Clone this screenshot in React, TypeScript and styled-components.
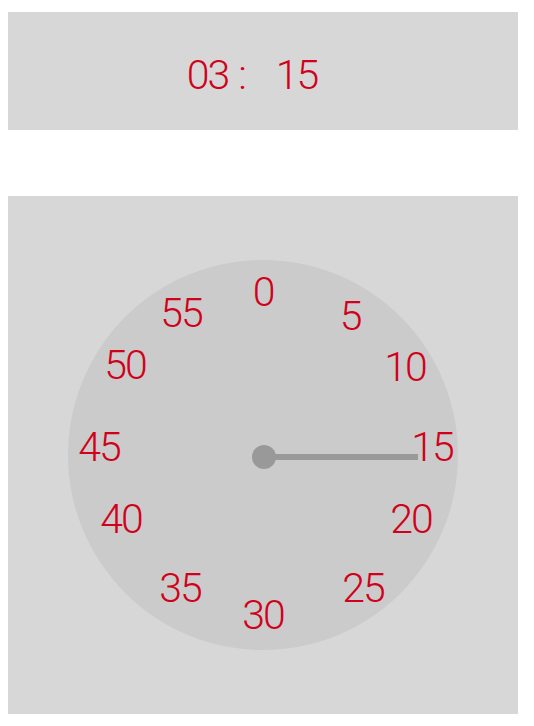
import styled, { createGlobalStyle } from 'styled-components';

const GlobalStyle = createGlobalStyle`
  body {
    margin: 8px;
    background: #ffffff;
    font-family: Roboto, "Open Sans", sans-serif;
  }
`;

const Page = styled.div`
  display: flex;
  flex-direction: column;
  width: 510px;
  padding-top: 4px;
`;

const TimeBar = styled.div`
  height: 118px;
  background: #d7d7d7;
  display: flex;
  justify-content: center;
  align-items: center;
  padding: 8px 22px 0 0;
  box-sizing: border-box;
  color: #d0021b;
  font-size: 41px;
  font-weight: 300;
  line-height: 1;
`;

const Digits = styled.span`
  letter-spacing: -2px;
`;

const Colon = styled.span`
  margin: 0 29px 0 10px;
`;

const DialPanel = styled.div`
  margin-top: 66px;
  height: 518px;
  background: #d7d7d7;
  display: flex;
  justify-content: center;
  align-items: center;
`;

const Dial = styled.div`
  position: relative;
  width: 390px;
  height: 390px;
  border-radius: 50%;
  background: #cbcbcb;
`;

const Mark = styled.span<{ $x: number; $y: number }>`
  position: absolute;
  left: ${p => p.$x}px;
  top: ${p => p.$y}px;
  transform: translate(-50%, -50%);
  color: #d0021b;
  font-size: 41px;
  font-weight: 300;
  line-height: 1;
  letter-spacing: -2px;
  white-space: nowrap;
`;

const Hand = styled.div<{ $angle: number }>`
  position: absolute;
  left: 196px;
  top: 194px;
  width: 154px;
  height: 6px;
  background: #999999;
  transform-origin: 0 50%;
  transform: rotate(${p => p.$angle}deg);
`;

const Pivot = styled.div`
  position: absolute;
  left: 184px;
  top: 185px;
  width: 24px;
  height: 24px;
  border-radius: 50%;
  background: #999999;
`;

// label centres on the dial face, one per five-minute step
const marks = [
  { label: '0', x: 195, y: 32 },
  { label: '5', x: 282, y: 56 },
  { label: '10', x: 337, y: 107 },
  { label: '15', x: 364, y: 187 },
  { label: '20', x: 343, y: 259 },
  { label: '25', x: 295, y: 328 },
  { label: '30', x: 195, y: 355 },
  { label: '35', x: 112, y: 328 },
  { label: '40', x: 53, y: 259 },
  { label: '45', x: 31, y: 187 },
  { label: '50', x: 57, y: 105 },
  { label: '55', x: 113, y: 53 },
];

export default function App() {
  const minutes = 3;
  const seconds = 15;
  const angle = seconds * 6 - 90;

  return (
    <>
      <GlobalStyle />
      <Page>
        <TimeBar>
          <Digits>{String(minutes).padStart(2, '0')}</Digits>
          <Colon>:</Colon>
          <Digits>{seconds}</Digits>
        </TimeBar>
        <DialPanel>
          <Dial>
            {marks.map(m => (
              <Mark key={m.label} $x={m.x} $y={m.y}>
                {m.label}
              </Mark>
            ))}
            <Hand $angle={angle} />
            <Pivot />
          </Dial>
        </DialPanel>
      </Page>
    </>
  );
}
